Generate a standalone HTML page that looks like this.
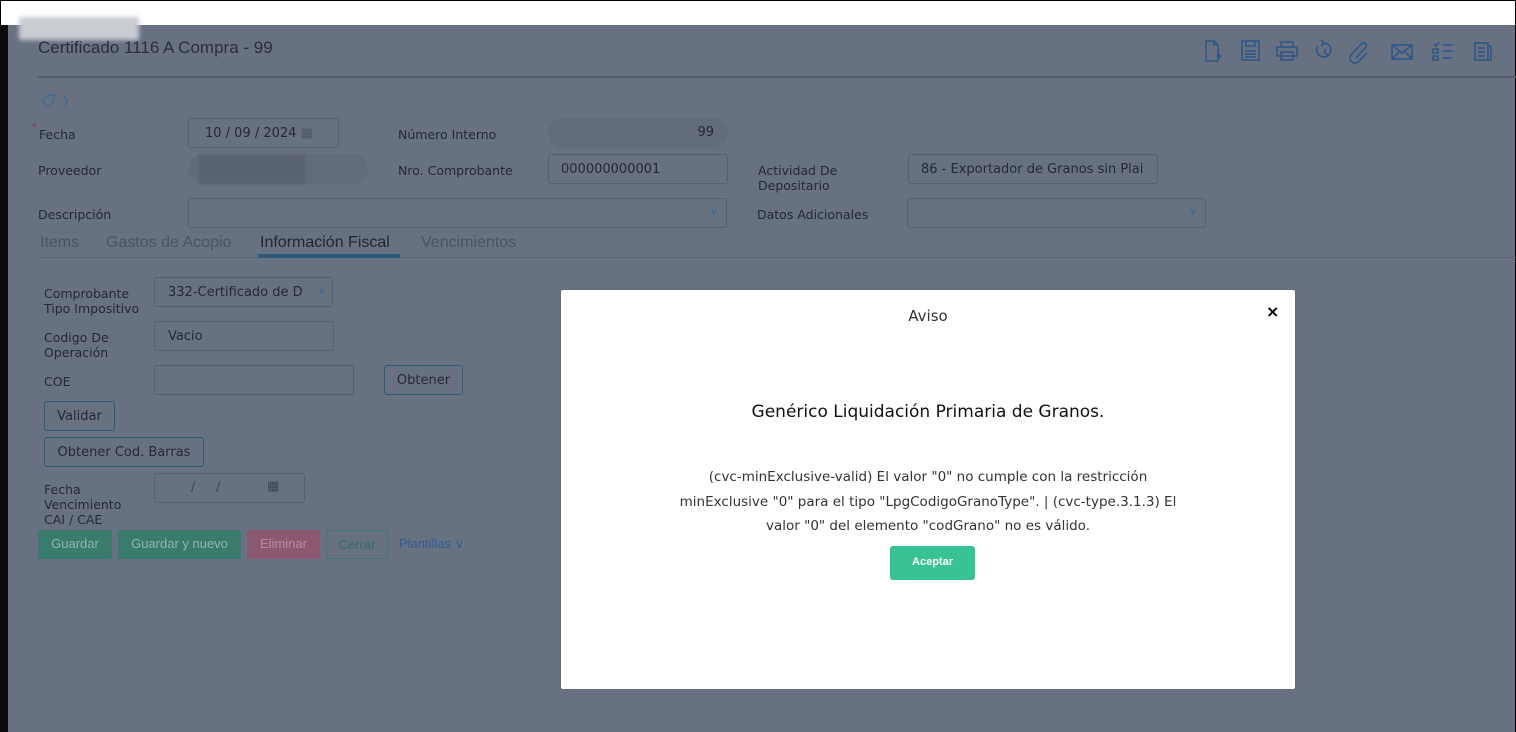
<!DOCTYPE html>
<html><head><meta charset="utf-8"><style>
*{box-sizing:border-box;margin:0;padding:0}
body{width:1516px;height:732px;overflow:hidden;background:#fff;font-family:"DejaVu Sans","Liberation Sans",sans-serif;position:relative}
.a{position:absolute}
.frame{left:0;top:25px;width:8px;height:707px;background:#0b0b0b}
.bg{left:8px;top:25px;width:1507px;height:707px;background:#687182}
.lbl{font-size:12.5px;color:#242a33}
.inp{border:1px solid #57606e;border-radius:3px;height:30px;font-size:13px;color:#242a33;padding:7px 15px}
.btn{border:1px solid #2d5b78;border-radius:3px;font-size:13px;color:#242a33;text-align:center}
.tab{font-family:"Liberation Sans",sans-serif;font-size:16px;top:234px;color:#4b5461}
.ic{stroke:#2c5688;fill:none;stroke-width:1.5}
</style></head><body>
<div class="a" style="left:0;top:0;width:1516px;height:1px;background:#000"></div>
<div class="a" style="left:0;top:0;width:1px;height:25px;background:#000"></div>
<div class="a" style="left:1515px;top:0;width:1px;height:732px;background:#000"></div>
<div class="a frame"></div>
<div class="a bg"></div>
<div class="a" style="left:19px;top:17px;width:120px;height:23px;background:#c9ccd1;filter:blur(2px)"></div>
<div class="a" style="left:38px;top:38px;font-size:17px;color:#2a303a;font-family:'Liberation Sans',sans-serif">Certificado 1116 A Compra - 99</div>
<div class="a" style="left:38px;top:76px;width:1478px;height:2px;background:#575f6c"></div>
<svg class="a" style="left:1200px;top:38px" width="316" height="30">
<g class="ic"><path d="M6 3h8l4 4v16H6z M14 3v4h4 M16 18h6 M19 15v6"/>
<rect x="42" y="3" width="17" height="19"/><path d="M46 3v5h9V3 M45 13h11 M45 16h11 M45 19h11"/>
<path d="M77 9h20v9H77z M81 9V4h12v5 M81 14h12v8H81z"/>
<path d="M118 8a7 7 0 1 0 6-3 M121 2l3 3-3 3 M125 11v4l3 2"/>
<path d="M156 20l10-11a3 3 0 0 0-4-4l-11 12a5 5 0 0 0 7 7l9-9"/>
<rect x="192" y="7" width="20" height="14"/><path d="M192 7l10 8 10-8 M192 21l7-7 M212 21l-7-7"/>
<path d="M234 6l2 2 3-4 M233 11h5v4h-5z M233 18h5v4h-5z M243 7h9 M243 13h9 M243 20h9"/>
<rect x="275" y="5" width="13" height="17"/><path d="M288 8h3v14h-3 M278 10h7 M278 14h7 M278 18h7"/></g></svg>
<svg class="a" style="left:39px;top:93px" width="30" height="16"><path d="M3 8l6-6h6v6l-6 6z M25 3l3 5-3 5" fill="none" stroke="#3a6a9a" stroke-width="1.2"/></svg>
<div class="a" style="left:32px;top:122px;color:#8a3b4b;font-size:10px">*</div>
<div class="a lbl" style="left:39px;top:127px">Fecha</div>
<div class="a inp" style="left:188px;top:118px;width:151px;padding-left:16px">10 / 09 / 2024 <span style="color:#4f5866">▦</span></div>
<div class="a lbl" style="left:398px;top:127px">Número Interno</div>
<div class="a" style="left:548px;top:118px;width:180px;height:30px;border-radius:15px;background:#636c7c;font-size:13px;color:#242a33;text-align:right;padding:7px 14px">99</div>
<div class="a lbl" style="left:38px;top:163px">Proveedor</div>
<div class="a" style="left:188px;top:154px;width:180px;height:30px;border-radius:15px;background:#636c7c"></div>
<div class="a" style="left:199px;top:155px;width:106px;height:29px;background:#59626f;filter:blur(1px)"></div>
<div class="a lbl" style="left:398px;top:163px">Nro. Comprobante</div>
<div class="a inp" style="left:548px;top:154px;width:180px;padding-left:12px">000000000001</div>
<div class="a lbl" style="left:758px;top:163px;line-height:15px">Actividad De<br>Depositario</div>
<div class="a inp" style="left:908px;top:154px;width:250px;padding-left:12px;white-space:nowrap;overflow:hidden">86 - Exportador de Granos sin Plai</div>
<div class="a lbl" style="left:38px;top:207px">Descripción</div>
<div class="a inp" style="left:188px;top:198px;width:539px"><span style="position:absolute;right:8px;top:6px;color:#3a6a9a;font-size:11px">∨</span></div>
<div class="a lbl" style="left:757px;top:207px">Datos Adicionales</div>
<div class="a inp" style="left:907px;top:198px;width:299px"><span style="position:absolute;right:8px;top:6px;color:#3a6a9a;font-size:11px">∨</span></div>
<div class="a tab" style="left:40px">Items</div>
<div class="a tab" style="left:106px">Gastos de Acopio</div>
<div class="a tab" style="left:260px;color:#222832">Información Fiscal</div>
<div class="a tab" style="left:421px">Vencimientos</div>
<div class="a" style="left:38px;top:257px;width:1478px;height:1px;background:#5a6370"></div>
<div class="a" style="left:258px;top:254px;width:142px;height:4px;background:#2d5b78"></div>
<div class="a lbl" style="left:44px;top:286px;line-height:15px">Comprobante<br>Tipo Impositivo</div>
<div class="a inp" style="left:154px;top:277px;width:179px;padding-left:13px;white-space:nowrap;overflow:hidden">332-Certificado de D<span style="position:absolute;right:6px;top:6px;color:#3a6a9a;font-size:11px;background:#687182;padding-left:4px">∨</span></div>
<div class="a lbl" style="left:44px;top:330px;line-height:15px">Codigo De<br>Operación</div>
<div class="a inp" style="left:154px;top:321px;width:180px;padding-left:13px">Vacio</div>
<div class="a lbl" style="left:44px;top:374px">COE</div>
<div class="a inp" style="left:154px;top:365px;width:200px"></div>
<div class="a btn" style="left:384px;top:365px;width:79px;height:30px;padding-top:7px">Obtener</div>
<div class="a btn" style="left:44px;top:401px;width:71px;height:30px;padding-top:7px">Validar</div>
<div class="a btn" style="left:44px;top:437px;width:160px;height:30px;padding-top:7px">Obtener Cod. Barras</div>
<div class="a lbl" style="left:44px;top:482px;line-height:15px">Fecha<br>Vencimiento<br>CAI / CAE</div>
<div class="a inp" style="left:154px;top:473px;width:151px;color:#3d4552"><span style="position:absolute;left:36px;top:6px">/&nbsp;&nbsp;&nbsp;&nbsp;&nbsp;/</span><span style="position:absolute;left:112px;top:5px">▦</span></div>
<div class="a" style="left:38px;top:530px;width:74px;height:29px;background:#3a7c6b;border-radius:2px;color:#8fb3a9;font-size:13px;font-family:'Liberation Sans',sans-serif;text-align:center;padding-top:6px">Guardar</div>
<div class="a" style="left:118px;top:530px;width:123px;height:29px;background:#3a7c6b;border-radius:2px;color:#8fb3a9;font-size:13px;font-family:'Liberation Sans',sans-serif;text-align:center;padding-top:6px">Guardar y nuevo</div>
<div class="a" style="left:247px;top:530px;width:73px;height:29px;background:#8c5870;border-radius:2px;color:#b48aa0;font-size:13px;font-family:'Liberation Sans',sans-serif;text-align:center;padding-top:6px">Eliminar</div>
<div class="a" style="left:326px;top:530px;width:62px;height:29px;border:1px solid #3f7a6e;border-radius:2px;color:#2f6f62;font-size:13px;font-family:'Liberation Sans',sans-serif;text-align:center;padding-top:6px">Cerrar</div>
<div class="a" style="left:399px;top:536px;color:#2f5e96;font-size:13px;font-family:'Liberation Sans',sans-serif">Plantillas ∨</div>
<div class="a" style="left:561px;top:290px;width:734px;height:399px;background:#fff;border-radius:2px">
 <div class="a" style="left:0;top:17px;width:734px;text-align:center;font-size:15px;color:#333">Aviso</div>
 <div class="a" style="left:705px;top:12px;font-size:16px;color:#000;font-weight:bold">×</div>
 <div class="a" style="left:0;top:112px;width:734px;text-align:center;font-size:17px;color:#111">Genérico Liquidación Primaria de Granos.</div>
 <div class="a" style="left:110px;top:175px;width:514px;text-align:center;font-size:13.5px;line-height:24.5px;color:#333">(cvc-minExclusive-valid) El valor "0" no cumple con la restricción minExclusive "0" para el tipo "LpgCodigoGranoType". | (cvc-type.3.1.3) El valor "0" del elemento "codGrano" no es válido.</div>
 <div class="a" style="left:329px;top:256px;width:85px;height:34px;background:#37c395;border-radius:3px;color:#fff;font-size:11px;font-weight:bold;text-align:center;padding-top:10px;font-family:'Liberation Sans',sans-serif">Aceptar</div>
</div>
</body></html>
